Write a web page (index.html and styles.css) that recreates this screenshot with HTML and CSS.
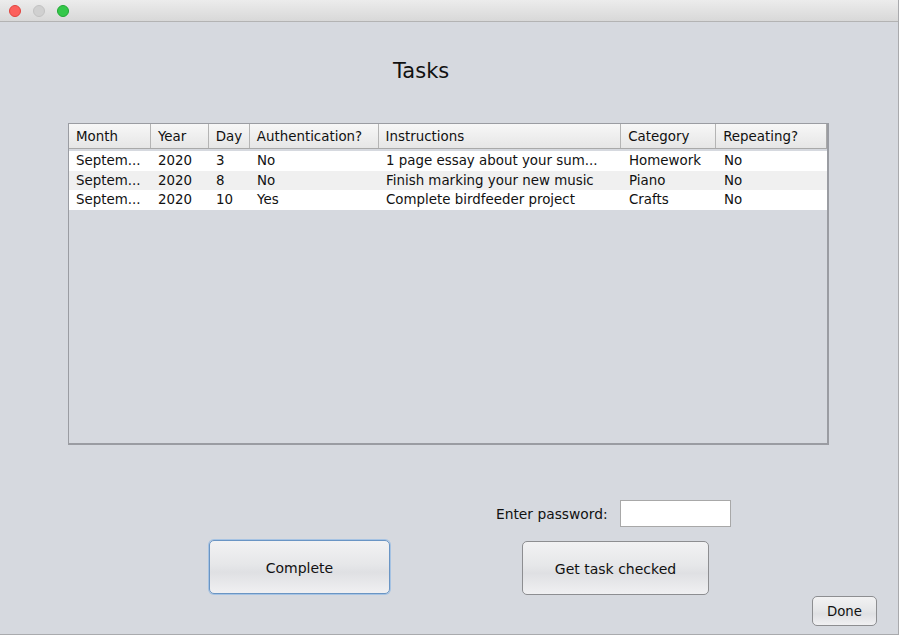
FILE: index.html
```html
<!DOCTYPE html>
<html>
<head>
<meta charset="utf-8">
<link rel="stylesheet" href="styles.css">
</head>
<body>
<div class="window">
  <div class="titlebar">
    <span class="light red"></span>
    <span class="light gray"></span>
    <span class="light green"></span>
  </div>
  <div class="content">
    <div class="title">Tasks</div>
    <div class="table">
      <div class="thead">
        <div class="th c1">Month</div>
        <div class="th c2">Year</div>
        <div class="th c3">Day</div>
        <div class="th c4">Authentication?</div>
        <div class="th c5">Instructions</div>
        <div class="th c6">Category</div>
        <div class="th c7">Repeating?</div>
      </div>
      <div class="tbody">
        <div class="tr">
          <div class="td c1">Septem...</div>
          <div class="td c2">2020</div>
          <div class="td c3">3</div>
          <div class="td c4">No</div>
          <div class="td c5">1 page essay about your sum...</div>
          <div class="td c6">Homework</div>
          <div class="td c7">No</div>
        </div>
        <div class="tr alt">
          <div class="td c1">Septem...</div>
          <div class="td c2">2020</div>
          <div class="td c3">8</div>
          <div class="td c4">No</div>
          <div class="td c5">Finish marking your new music</div>
          <div class="td c6">Piano</div>
          <div class="td c7">No</div>
        </div>
        <div class="tr">
          <div class="td c1">Septem...</div>
          <div class="td c2">2020</div>
          <div class="td c3">10</div>
          <div class="td c4">Yes</div>
          <div class="td c5">Complete birdfeeder project</div>
          <div class="td c6">Crafts</div>
          <div class="td c7">No</div>
        </div>
      </div>
    </div>
    <div class="pwrow">
      <span class="pwlabel">Enter password:</span>
      <div class="pwinput"></div>
    </div>
    <div class="btnrow">
      <div class="btn big focus">Complete</div>
      <div class="btn big second">Get task checked</div>
    </div>
    <div class="donerow">
      <div class="btn done">Done</div>
    </div>
  </div>
</div>
</body>
</html>
```
FILE: styles.css
```css
html, body {
  margin: 0;
  padding: 0;
  background: #ffffff;
}
body {
  width: 902px;
  height: 636px;
  overflow: hidden;
  font-family: "DejaVu Sans", "Liberation Sans", sans-serif;
  color: #111;
}
.window {
  width: 898px;
  height: 634px;
  border-right: 1px solid #a9aaad;
  border-bottom: 1px solid #a9aaad;
  display: flex;
  flex-direction: column;
  background: #d6d9df;
}
.titlebar {
  height: 22px;
  box-sizing: border-box;
  background: linear-gradient(#ececec, #d8d8d8);
  border-bottom: 1px solid #b3b3b3;
  display: flex;
  align-items: center;
  padding-left: 9px;
  gap: 12px;
}
.light {
  width: 12px;
  height: 12px;
  border-radius: 50%;
  box-sizing: border-box;
}
.red { background: #fc605c; border: 1px solid #e0443e; }
.gray { background: #d0d0d0; border: 1px solid #c2c2c2; }
.green { background: #34c84a; border: 1px solid #21a835; }
.content {
  flex: 1;
  display: flex;
  flex-direction: column;
}
.title {
  margin-top: 36px;
  margin-left: 393px;
  font-size: 21px;
  height: 26px;
  line-height: 26px;
  color: #111;
}
.table {
  margin-top: 39px;
  margin-left: 68px;
  width: 761px;
  height: 322px;
  box-sizing: border-box;
  border: 1px solid #9a9ca2;
  border-right-width: 2px;
  border-bottom-width: 2px;
  font-size: 13.4px;
}
.thead {
  display: flex;
  height: 25px;
  box-sizing: border-box;
  background: linear-gradient(#f7f7f7, #e6e6e6);
  border-bottom: 1px solid #a9a9a9;
  width: 758px;
  border-right: 1px solid #a9a9a9;
}
.th {
  box-sizing: border-box;
  border-right: 1px solid #b4b4b4;
  padding-left: 7px;
  padding-top: 1px;
  line-height: 23px;
  white-space: nowrap;
  overflow: hidden;
}
.th.c7 { border-right: none; }
.c1 { width: 82px; }
.c2 { width: 58px; }
.c3 { width: 41px; }
.c4 { width: 129px; }
.c5 { width: 243px; }
.c6 { width: 95px; }
.c7 { width: 110px; }
.tbody {
  padding-top: 2px;
  width: 758px;
}
.tr {
  display: flex;
  height: 19.5px;
  background: #ffffff;
}
.tr.alt { background: #f0f0f0; }
.td {
  box-sizing: border-box;
  padding-left: 7px;
  line-height: 19.5px;
  white-space: nowrap;
  overflow: hidden;
}
.pwrow {
  margin-top: 55px;
  display: flex;
  align-items: center;
  margin-left: 496px;
  height: 27px;
}
.pwlabel {
  font-size: 13.8px;
  width: 124px;
}
.pwinput {
  width: 111px;
  height: 27px;
  box-sizing: border-box;
  background: #fff;
  border: 1px solid #a8a8a8;
}
.btnrow {
  margin-top: 13px;
  display: flex;
  margin-left: 209px;
  gap: 132px;
  height: 55px;
}
.btn {
  box-sizing: border-box;
  display: flex;
  align-items: center;
  justify-content: center;
  background: linear-gradient(#f2f2f3, #e6e7e9 45%, #dfe0e3 60%, #f0f0f2);
  border: 1px solid #8d8e91;
  border-radius: 5px;
  color: #111;
}
.big {
  font-size: 14px;
  height: 54px;
  padding-top: 1px;
}
.focus {
  width: 181px;
  border: 1px solid #6a95c4;
  box-shadow: 0 0 0 1px #a6c3e3;
}
.second {
  width: 187px;
  margin-top: 1px;
}
.donerow {
  margin-top: 1px;
  margin-left: 812px;
}
.done {
  width: 65px;
  height: 30px;
  font-size: 13.3px;
}
```
